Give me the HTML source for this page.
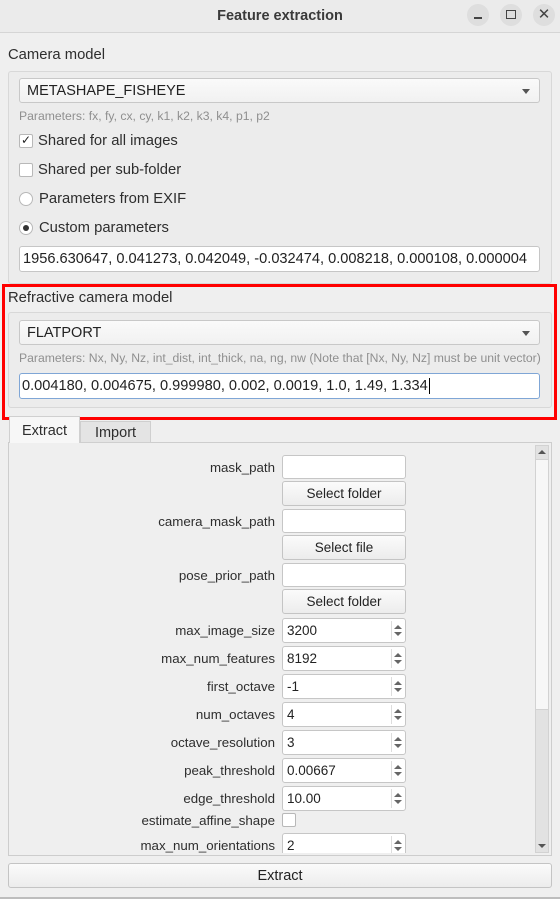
<!DOCTYPE html>
<html><head><style>
*{box-sizing:border-box;margin:0;padding:0}
body{width:560px;height:899px;background:#efefef;font-family:"Liberation Sans",sans-serif;font-size:13px;color:#2e2e2e;position:relative;overflow:hidden}
.a{position:absolute}
.title{left:0;top:0;width:560px;height:33px;background:#ebebeb;border-bottom:1px solid #d5d5d5;text-align:center;line-height:32px;font-weight:bold;font-size:14.5px;color:#3a3a3a}
.cb{width:22px;height:22px;border-radius:50%;background:#dedede;top:4px}
.grp{border:1px solid #d8d8d8;border-radius:3px;background:#ececec}
.combo{border:1px solid #c8c8c8;border-radius:3px;background:linear-gradient(#fafafa,#f1f1f1);padding-left:7px;line-height:25px;font-size:14.5px;color:#222}
.combo:after{content:"";position:absolute;right:9px;top:10px;border-left:4px solid transparent;border-right:4px solid transparent;border-top:5px solid #555}
.edit{background:#fff;border:1px solid #c6c6c6;border-radius:3px;padding-left:3px;line-height:25px;font-size:14.6px;color:#222;white-space:nowrap;overflow:hidden}
.hint{font-size:12.2px;color:#8f8f8f;white-space:nowrap}
.lbl{font-size:14.8px}
.chk{width:14px;height:14px;border:1px solid #b8b8b8;background:#fff;border-radius:2px}
.rad{width:14px;height:14px;border:1px solid #b8b8b8;background:#fff;border-radius:50%}
.btn{border:1px solid #c4c4c4;border-radius:3px;background:linear-gradient(#fbfbfb,#ececec);text-align:center;line-height:24px;font-size:13.5px;color:#222}
.fl{right:285px;text-align:right;font-size:13.3px;line-height:25px;white-space:nowrap}
.spin{left:282px;width:124px;height:25px;background:#fff;border:1px solid #c6c6c6;border-radius:3px;padding-left:4px;line-height:24px;font-size:13.5px;color:#222}
.spin:after{content:"";position:absolute;right:13px;top:2px;bottom:2px;border-left:1px solid #ddd}
.up,.dn{position:absolute;right:3px;width:0;height:0;border-left:4px solid transparent;border-right:4px solid transparent}
.up{top:6px;border-bottom:4px solid #666}.dn{top:13px;border-top:4px solid #666}
</style></head><body>
<div class="a title">Feature extraction</div>
<div class="a cb" style="left:467px"><div class="a" style="left:7px;top:13px;width:8px;height:1.5px;background:#444"></div></div>
<div class="a cb" style="left:500px"><div class="a" style="left:6px;top:6px;width:10px;height:9px;border:1.5px solid #444"></div></div>
<div class="a cb" style="left:533px;font-size:15px;line-height:22px;text-align:center;color:#444">✕</div>

<div class="a lbl" style="left:8px;top:47px">Camera model</div>
<div class="a grp" style="left:8px;top:71px;width:544px;height:213px"></div>
<div class="a combo" style="left:19px;top:78px;width:521px;height:25px">METASHAPE_FISHEYE</div>
<div class="a hint" style="left:19px;top:109px">Parameters: fx, fy, cx, cy, k1, k2, k3, k4, p1, p2</div>
<div class="a chk" style="left:19px;top:134px"><span class="a" style="left:1px;top:-2px;font-size:12px;color:#222">✓</span></div>
<div class="a lbl" style="left:38px;top:133px">Shared for all images</div>
<div class="a chk" style="left:19px;top:163px"></div>
<div class="a lbl" style="left:38px;top:162px">Shared per sub-folder</div>
<div class="a rad" style="left:19px;top:192px"></div>
<div class="a lbl" style="left:39px;top:191px">Parameters from EXIF</div>
<div class="a rad" style="left:19px;top:221px"><div class="a" style="left:3px;top:3px;width:6px;height:6px;border-radius:50%;background:#333"></div></div>
<div class="a lbl" style="left:39px;top:220px">Custom parameters</div>
<div class="a edit" style="left:19px;top:246px;width:521px;height:26px">1956.630647, 0.041273, 0.042049, -0.032474, 0.008218, 0.000108, 0.000004</div>

<div class="a lbl" style="left:8px;top:290px">Refractive camera model</div>
<div class="a grp" style="left:8px;top:312px;width:544px;height:96px"></div>
<div class="a combo" style="left:19px;top:320px;width:521px;height:25px">FLATPORT</div>
<div class="a hint" style="left:19px;top:351px">Parameters: Nx, Ny, Nz, int_dist, int_thick, na, ng, nw (Note that [Nx, Ny, Nz] must be unit vector)</div>
<div class="a edit" style="left:19px;top:373px;width:521px;height:26px;border-color:#7fa6d6;padding-left:2px">0.004180, 0.004675, 0.999980, 0.002, 0.0019, 1.0, 1.49, 1.334<span style="border-left:1px solid #000;margin-left:1px"></span></div>
<div class="a" style="left:2px;top:284px;width:555px;height:136px;border:3px solid #f00"></div>

<div class="a" style="left:8px;top:442px;width:544px;height:414px;border:1px solid #cdcdcd;background:#efefef"></div>
<div class="a" style="left:9px;top:416px;width:71px;height:27px;background:#f7f7f7;border:1px solid #d0d0d0;border-bottom:none;text-align:center;line-height:29px;font-size:14.5px">Extract</div>
<div class="a" style="left:80px;top:421px;width:71px;height:22px;background:#e4e4e4;border:1px solid #cfcfcf;text-align:center;line-height:22px;font-size:14.5px">Import</div>

<div class="a" style="left:535px;top:445px;width:14px;height:408px;background:#e2e2e2;border:1px solid #d2d2d2"></div>
<div class="a" style="left:536px;top:459px;width:12px;height:251px;background:#f7f7f7;border-top:1px solid #d2d2d2;border-bottom:1px solid #d2d2d2"></div>
<div class="a" style="left:538px;top:450px;border-left:4px solid transparent;border-right:4px solid transparent;border-bottom:4px solid #555"></div>
<div class="a" style="left:538px;top:844px;border-left:4px solid transparent;border-right:4px solid transparent;border-top:4px solid #555"></div>

<div class="a fl" style="top:455px">mask_path</div>
<div class="a edit" style="left:282px;top:455px;width:124px;height:24px"></div>
<div class="a btn" style="left:282px;top:481px;width:124px;height:25px">Select folder</div>
<div class="a fl" style="top:509px">camera_mask_path</div>
<div class="a edit" style="left:282px;top:509px;width:124px;height:24px"></div>
<div class="a btn" style="left:282px;top:535px;width:124px;height:25px">Select file</div>
<div class="a fl" style="top:563px">pose_prior_path</div>
<div class="a edit" style="left:282px;top:563px;width:124px;height:24px"></div>
<div class="a btn" style="left:282px;top:589px;width:124px;height:25px">Select folder</div>

<div class="a fl" style="top:618px">max_image_size</div><div class="a spin" style="top:618px">3200<i class="up"></i><i class="dn"></i></div>
<div class="a fl" style="top:646px">max_num_features</div><div class="a spin" style="top:646px">8192<i class="up"></i><i class="dn"></i></div>
<div class="a fl" style="top:674px">first_octave</div><div class="a spin" style="top:674px">-1<i class="up"></i><i class="dn"></i></div>
<div class="a fl" style="top:702px">num_octaves</div><div class="a spin" style="top:702px">4<i class="up"></i><i class="dn"></i></div>
<div class="a fl" style="top:730px">octave_resolution</div><div class="a spin" style="top:730px">3<i class="up"></i><i class="dn"></i></div>
<div class="a fl" style="top:758px">peak_threshold</div><div class="a spin" style="top:758px">0.00667<i class="up"></i><i class="dn"></i></div>
<div class="a fl" style="top:786px">edge_threshold</div><div class="a spin" style="top:786px">10.00<i class="up"></i><i class="dn"></i></div>
<div class="a fl" style="top:808px">estimate_affine_shape</div><div class="a chk" style="left:282px;top:813px"></div>
<div class="a fl" style="top:833px">max_num_orientations</div>
<div class="a" style="left:282px;top:833px;width:124px;height:20px;overflow:hidden"><div class="a spin" style="left:0;top:0">2<i class="up"></i><i class="dn"></i></div></div>

<div class="a btn" style="left:8px;top:863px;width:544px;height:25px;font-size:14.5px;line-height:24px">Extract</div>
<div class="a" style="left:0;top:897px;width:560px;height:2px;background:#bdbdbd"></div>
</body></html>
